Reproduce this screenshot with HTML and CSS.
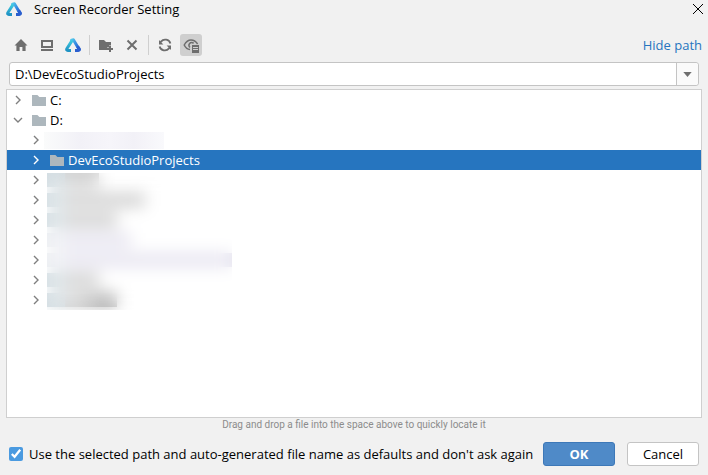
FILE: index.html
```html
<!DOCTYPE html>
<html lang="en">
<head>
    <meta charset="UTF-8">
    <meta name="viewport" content="width=device-width, initial-scale=1.0">
    <title>Screen Recorder Setting</title>
    <link rel="stylesheet" href="styles.css">
</head>
<body>
    <!-- Shared icons -->
    <svg class="sprite" aria-hidden="true">
        <defs>
            <linearGradient id="logo-left" x1="0" y1="0" x2="0" y2="1">
                <stop offset="0" stop-color="#3fcbe0"/>
                <stop offset="1" stop-color="#1f93c4"/>
            </linearGradient>
            <linearGradient id="logo-right" x1="0" y1="0" x2="1" y2="1">
                <stop offset="0" stop-color="#4fc4ea"/>
                <stop offset="0.6" stop-color="#2f7de0"/>
                <stop offset="1" stop-color="#2a58c8"/>
            </linearGradient>
        </defs>
        <symbol id="logo" viewBox="0 0 16 16">
            <path d="M6.6 3.2L8.4 2.8L14 12.2" fill="none" stroke="url(#logo-right)" stroke-width="3" stroke-linejoin="round" stroke-linecap="round"/>
            <path d="M7 3.6L1.8 11.8Q1.2 13.4 2.8 13.4H6" fill="none" stroke="url(#logo-left)" stroke-width="3" stroke-linejoin="round"/>
            <path d="M10 13.4H13.2Q15 13.2 14.2 11.8L12.6 9.4" fill="none" stroke="#2a5fcf" stroke-width="3" stroke-linejoin="round"/>
        </symbol>
        <symbol id="chevron" viewBox="0 0 16 16">
            <path d="M6 4L10 8L6 12" fill="none" stroke="currentColor" stroke-width="1.4"/>
        </symbol>
        <symbol id="folder" viewBox="0 0 16 16">
            <path d="M1 3H6.4L8.4 5H15V14H1Z" fill="#adb7bd"/>
        </symbol>
    </svg>

    <div class="dialog">
        <header class="titlebar">
            <svg class="icon"><use href="#logo"/></svg>
            <h1>Screen Recorder Setting</h1>
            <button class="close" type="button" aria-label="Close">
                <svg viewBox="0 0 12 12"><path d="M1 1L11 11M11 1L1 11" fill="none" stroke="#000"/></svg>
            </button>
        </header>

        <div class="toolbar">
            <button class="tool" type="button" aria-label="Home">
                <svg class="icon" viewBox="0 0 16 16"><path d="M8 2L14.5 8.6H12.6V14H9.4V10H6.6V14H3.4V8.6H1.5Z" fill="#6e6e6e"/></svg>
            </button>
            <button class="tool" type="button" aria-label="Desktop">
                <svg class="icon" viewBox="0 0 16 16"><path d="M3 4H13V10H3ZM2 13H14" fill="none" stroke="#6e6e6e" stroke-width="2"/></svg>
            </button>
            <button class="tool" type="button" aria-label="Project">
                <svg class="icon"><use href="#logo"/></svg>
            </button>
            <span class="divider"></span>
            <button class="tool" type="button" aria-label="New Folder">
                <svg class="icon" viewBox="0 0 16 16">
                    <path d="M1 3H6L8 5H13V8.4H11V10.4H9V13H1Z" fill="#6e6e6e"/>
                    <path d="M12 9V15M9 12H15" stroke="#6e6e6e" stroke-width="2"/>
                </svg>
            </button>
            <button class="tool" type="button" aria-label="Delete">
                <svg class="icon" viewBox="0 0 16 16"><path d="M3.5 3.5L12.5 12.5M12.5 3.5L3.5 12.5" stroke="#6e6e6e" stroke-width="2"/></svg>
            </button>
            <span class="divider"></span>
            <button class="tool" type="button" aria-label="Refresh">
                <svg class="icon" viewBox="0 0 16 16">
                    <path d="M13.4 6.6A5.4 5.4 0 0 0 4 4.6L3 6M2.6 9.4A5.4 5.4 0 0 0 12 11.4L13 10" fill="none" stroke="#6e6e6e" stroke-width="1.8"/>
                    <path d="M2 3V7.4H6.4ZM14 13V8.6H9.6Z" fill="#6e6e6e"/>
                </svg>
            </button>
            <button class="tool active" type="button" aria-label="Show Hidden Files" aria-pressed="true">
                <svg class="icon" viewBox="0 0 16 16">
                    <path d="M14.6 7Q12 3 8 3T1.2 8Q3.4 12.4 7 12.6" fill="none" stroke="#6e6e6e" stroke-width="1.5"/>
                    <path d="M10.6 6.4A2.7 2.7 0 1 0 7 10.4" fill="none" stroke="#6e6e6e" stroke-width="1.6"/>
                    <path d="M9 8H16V16H9Z" fill="#6e6e6e"/>
                    <path d="M10 10.5H15M10 12.5H15" stroke="#cfcfcf"/>
                </svg>
            </button>
            <a class="hide-path" href="#">Hide path</a>
        </div>

        <div class="path">
            <input type="text" value="D:\DevEcoStudioProjects" aria-label="Path">
            <button type="button" aria-label="Recent paths">
                <svg viewBox="0 0 10 6"><path d="M0 0H10L5 6Z" fill="#6e6e6e"/></svg>
            </button>
        </div>

        <main class="tree">
            <ul>
                <li class="row"><svg class="icon arrow"><use href="#chevron"/></svg><svg class="icon"><use href="#folder"/></svg>C:</li>
                <li class="row"><svg class="icon arrow open"><use href="#chevron"/></svg><svg class="icon"><use href="#folder"/></svg>D:</li>
            </ul>
            <ul class="children">
                <li class="row"><svg class="icon arrow"><use href="#chevron"/></svg><span class="masked"></span></li>
                <li class="row selected"><svg class="icon arrow"><use href="#chevron"/></svg><svg class="icon"><use href="#folder"/></svg>DevEcoStudioProjects</li>
            </ul>
            <ul class="children masked-group">
                <li class="row"><svg class="icon arrow"><use href="#chevron"/></svg><span class="name short"></span></li>
                <li class="row"><svg class="icon arrow"><use href="#chevron"/></svg><span class="name long"></span></li>
                <li class="row"><svg class="icon arrow"><use href="#chevron"/></svg><span class="name medium"></span></li>
                <li class="row"><svg class="icon arrow"><use href="#chevron"/></svg><span class="name tinted"></span></li>
                <li class="row"><svg class="icon arrow"><use href="#chevron"/></svg><span class="name tinted full"></span></li>
                <li class="row"><svg class="icon arrow"><use href="#chevron"/></svg><span class="name short"></span></li>
                <li class="row"><svg class="icon arrow"><use href="#chevron"/></svg><span class="name dark medium"></span></li>
            </ul>
        </main>

        <p class="hint">Drag and drop a file into the space above to quickly locate it</p>

        <footer class="footer">
            <label>
                <input type="checkbox" checked>
                Use the selected path and auto-generated file name as defaults and don't ask again
            </label>
            <button class="btn primary" type="button">OK</button>
            <button class="btn" type="button">Cancel</button>
        </footer>
    </div>
</body>
</html>
```

FILE: styles.css
```css
* {
    box-sizing: border-box;
}

body {
    margin: 0;
    background-color: #f1f1f1;
    color: #000;
    font-family: "Open Sans", "Noto Sans", sans-serif;
    font-size: 13px;
    line-height: 18px;
}

button,
input {
    margin: 0;
    padding: 0;
    font: inherit;
    color: inherit;
}

ul {
    margin: 0;
    padding: 0;
    list-style: none;
}

svg {
    display: block;
}

.sprite {
    position: absolute;
    width: 0;
    height: 0;
}

.icon {
    flex: none;
    width: 16px;
    height: 16px;
}

.dialog {
    display: flex;
    flex-direction: column;
    min-height: 100vh;
}

/* Title bar */
.titlebar {
    display: flex;
    align-items: center;
    gap: 12px;
    height: 18px;
    padding: 0 4px 0 6px;
}

.titlebar h1 {
    flex: 1;
    margin: 0;
    font-size: 13px;
    font-weight: normal;
}

.close {
    width: 12px;
    height: 12px;
    border: none;
    background: none;
}

/* Toolbar */
.toolbar {
    display: flex;
    align-items: center;
    gap: 4px;
    margin-top: 16px;
    padding: 0 6px 0 10px;
}

.tool {
    display: flex;
    align-items: center;
    justify-content: center;
    width: 22px;
    height: 22px;
    border: none;
    border-radius: 3px;
    background: none;
}

.tool.active {
    background-color: #cfcfcf;
}

.divider {
    width: 1px;
    height: 20px;
    margin: 0 1px;
    background-color: #cfcfcf;
}

.hide-path {
    margin-left: auto;
    color: #2675bf;
    text-decoration: none;
}

/* Path field */
.path {
    display: flex;
    height: 24px;
    margin: 6px 9px 3px;
    border: 1px solid #c4c4c4;
    border-radius: 3px;
    background-color: #fff;
}

.path input {
    flex: 1;
    min-width: 0;
    padding: 0 5px;
    border: none;
    background: none;
    outline: none;
}

.path button {
    display: flex;
    align-items: center;
    justify-content: center;
    width: 22px;
    border: none;
    border-left: 1px solid #c4c4c4;
    border-radius: 0 3px 3px 0;
    background-color: #fafafa;
}

.path button svg {
    width: 9px;
    height: 5px;
}

/* Folder tree */
.tree {
    flex: 1;
    margin: 0 6px;
    border: 1px solid #cfcfcf;
    background-color: #fff;
}

.row {
    display: flex;
    align-items: center;
    height: 20px;
    padding-left: 3px;
}

.row .icon + .icon {
    margin: 0 3px 0 5px;
}

.children .row {
    padding-left: 21px;
}

.arrow {
    color: #7f7f7f;
}

.arrow.open {
    transform: rotate(90deg);
}

.row.selected {
    background-color: #2675bf;
    color: #fff;
}

.selected .arrow {
    color: #fff;
}

/* Masked folder names */
.masked {
    width: 120px;
    height: 17px;
    background: linear-gradient(90deg, #fafbfb, #f2f1f7 30%, #f6f5fa 55%, #f2f1f7 75%, #f9f9fc);
}

.masked-group {
    position: relative;
}

.masked-group::after {
    content: "";
    position: absolute;
    top: 3px;
    left: 40px;
    width: 185px;
    height: 137px;
    backdrop-filter: blur(8px);
}

.name {
    height: 14px;
    margin-left: 3px;
    border-left: 18px solid #d3dde2;
    background-color: #d2d2d2;
}

.name.short {
    width: 52px;
}

.name.medium {
    width: 70px;
}

.name.long {
    width: 98px;
}

.name.tinted {
    width: 84px;
    border-color: #eceef2;
    background-color: #e7e5f0;
}

.name.full {
    width: 185px;
}

.name.dark {
    background: linear-gradient(90deg, #d2d2d2 20%, #b4b4b4 70%);
}

.hint {
    margin: 0;
    color: #8c8c8c;
    font-family: Roboto, sans-serif;
    font-size: 10px;
    line-height: 14px;
    text-align: center;
}

/* Footer */
.footer {
    display: flex;
    align-items: center;
    gap: 12px;
    padding: 10px 9px 9px;
}

.footer label {
    display: flex;
    flex: 1;
    align-items: center;
    gap: 6px;
    min-width: 0;
    white-space: nowrap;
}

.footer input {
    flex: none;
    width: 14px;
    height: 14px;
    accent-color: #4a9ae0;
}

.btn {
    flex: none;
    width: 72px;
    height: 24px;
    border: 1px solid #c4c4c4;
    border-radius: 3px;
    background-color: #fff;
}

.btn.primary {
    border-color: #3d78b8;
    background-color: #4f8ac8;
    color: #fff;
    font-weight: bold;
}
```
